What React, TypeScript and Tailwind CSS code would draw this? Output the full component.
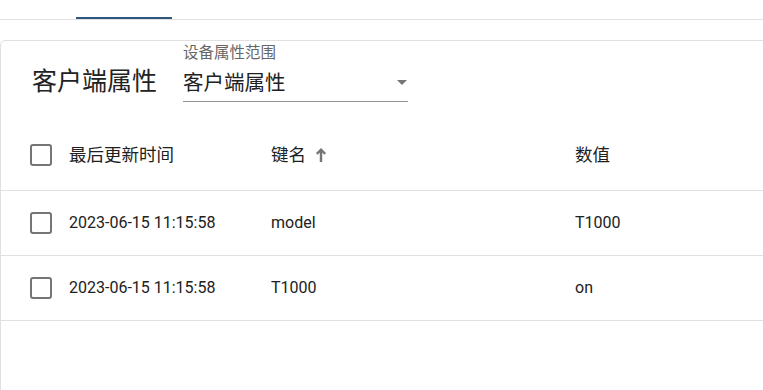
const font = { fontFamily: '"Roboto", "Noto Sans CJK SC", sans-serif' }

type Attr = { updated: string; key: string; value: string }

const rows: Attr[] = [
  { updated: '2023-06-15 11:15:58', key: 'model', value: 'T1000' },
  { updated: '2023-06-15 11:15:58', key: 'T1000', value: 'on' },
]

const CheckBox = () => (
  <span className="block w-[22px] h-[22px] border-2 border-[#757575] rounded-[3px]" />
)

const SortArrow = () => (
  <svg width="10" height="14" viewBox="0 0 10 14" className="ml-[10px] shrink-0">
    <path d="M5 0 L10 5 L8.3 6.7 L6.2 4.5 V14 H3.8 V4.5 L1.7 6.7 L0 5 Z" fill="#757575" />
  </svg>
)

export default function App() {
  return (
    <div className="w-[763px] h-[390px] overflow-hidden bg-white text-[#212121]" style={font}>
      {/* tabs strip */}
      <div className="h-[20px] border-b border-[#e0e0e0]">
        <div className="ml-[76px] w-[96px] h-full flex items-end">
          <div className="w-full h-[2px] bg-[#305680]" />
        </div>
      </div>

      {/* attributes card */}
      <div className="mt-[20px] w-[800px] h-[400px] border border-[#e0e0e0] rounded-[5px]">
        <div className="h-[79px] flex items-start">
          <h2 className="ml-[31px] mt-[28px] text-[25px] leading-none font-normal text-[#222]">
            客户端属性
          </h2>
          <div className="ml-[26px] w-[225px] pt-[5px] border-b border-[#949494]">
            <div className="text-[15.5px] leading-none text-[#666]">设备属性范围</div>
            <div className="mt-[11px] mb-[8px] flex items-center justify-between">
              <span className="text-[20.5px] leading-[20px]">客户端属性</span>
              <svg width="10" height="5" viewBox="0 0 10 5" className="mr-[1px]">
                <path d="M0 0 L10 0 L5 5 Z" fill="#757575" />
              </svg>
            </div>
          </div>
        </div>

        {/* table header */}
        <div className="h-[71px] flex items-center border-b border-[#e0e0e0] text-[17.5px]">
          <div className="pl-[29px] w-[68px] shrink-0">
            <CheckBox />
          </div>
          <div className="w-[202px] shrink-0">最后更新时间</div>
          <div className="w-[304px] shrink-0 flex items-center">
            键名
            <SortArrow />
          </div>
          <div className="flex-1">数值</div>
        </div>

        {rows.map((r) => (
          <div
            key={r.key}
            className="h-[65px] flex items-center border-b border-[#e0e0e0] text-[16px]"
          >
            <div className="pl-[29px] w-[68px] shrink-0">
              <CheckBox />
            </div>
            <div className="w-[202px] shrink-0">{r.updated}</div>
            <div className="w-[304px] shrink-0">{r.key}</div>
            <div className="flex-1">{r.value}</div>
          </div>
        ))}
      </div>
    </div>
  )
}
